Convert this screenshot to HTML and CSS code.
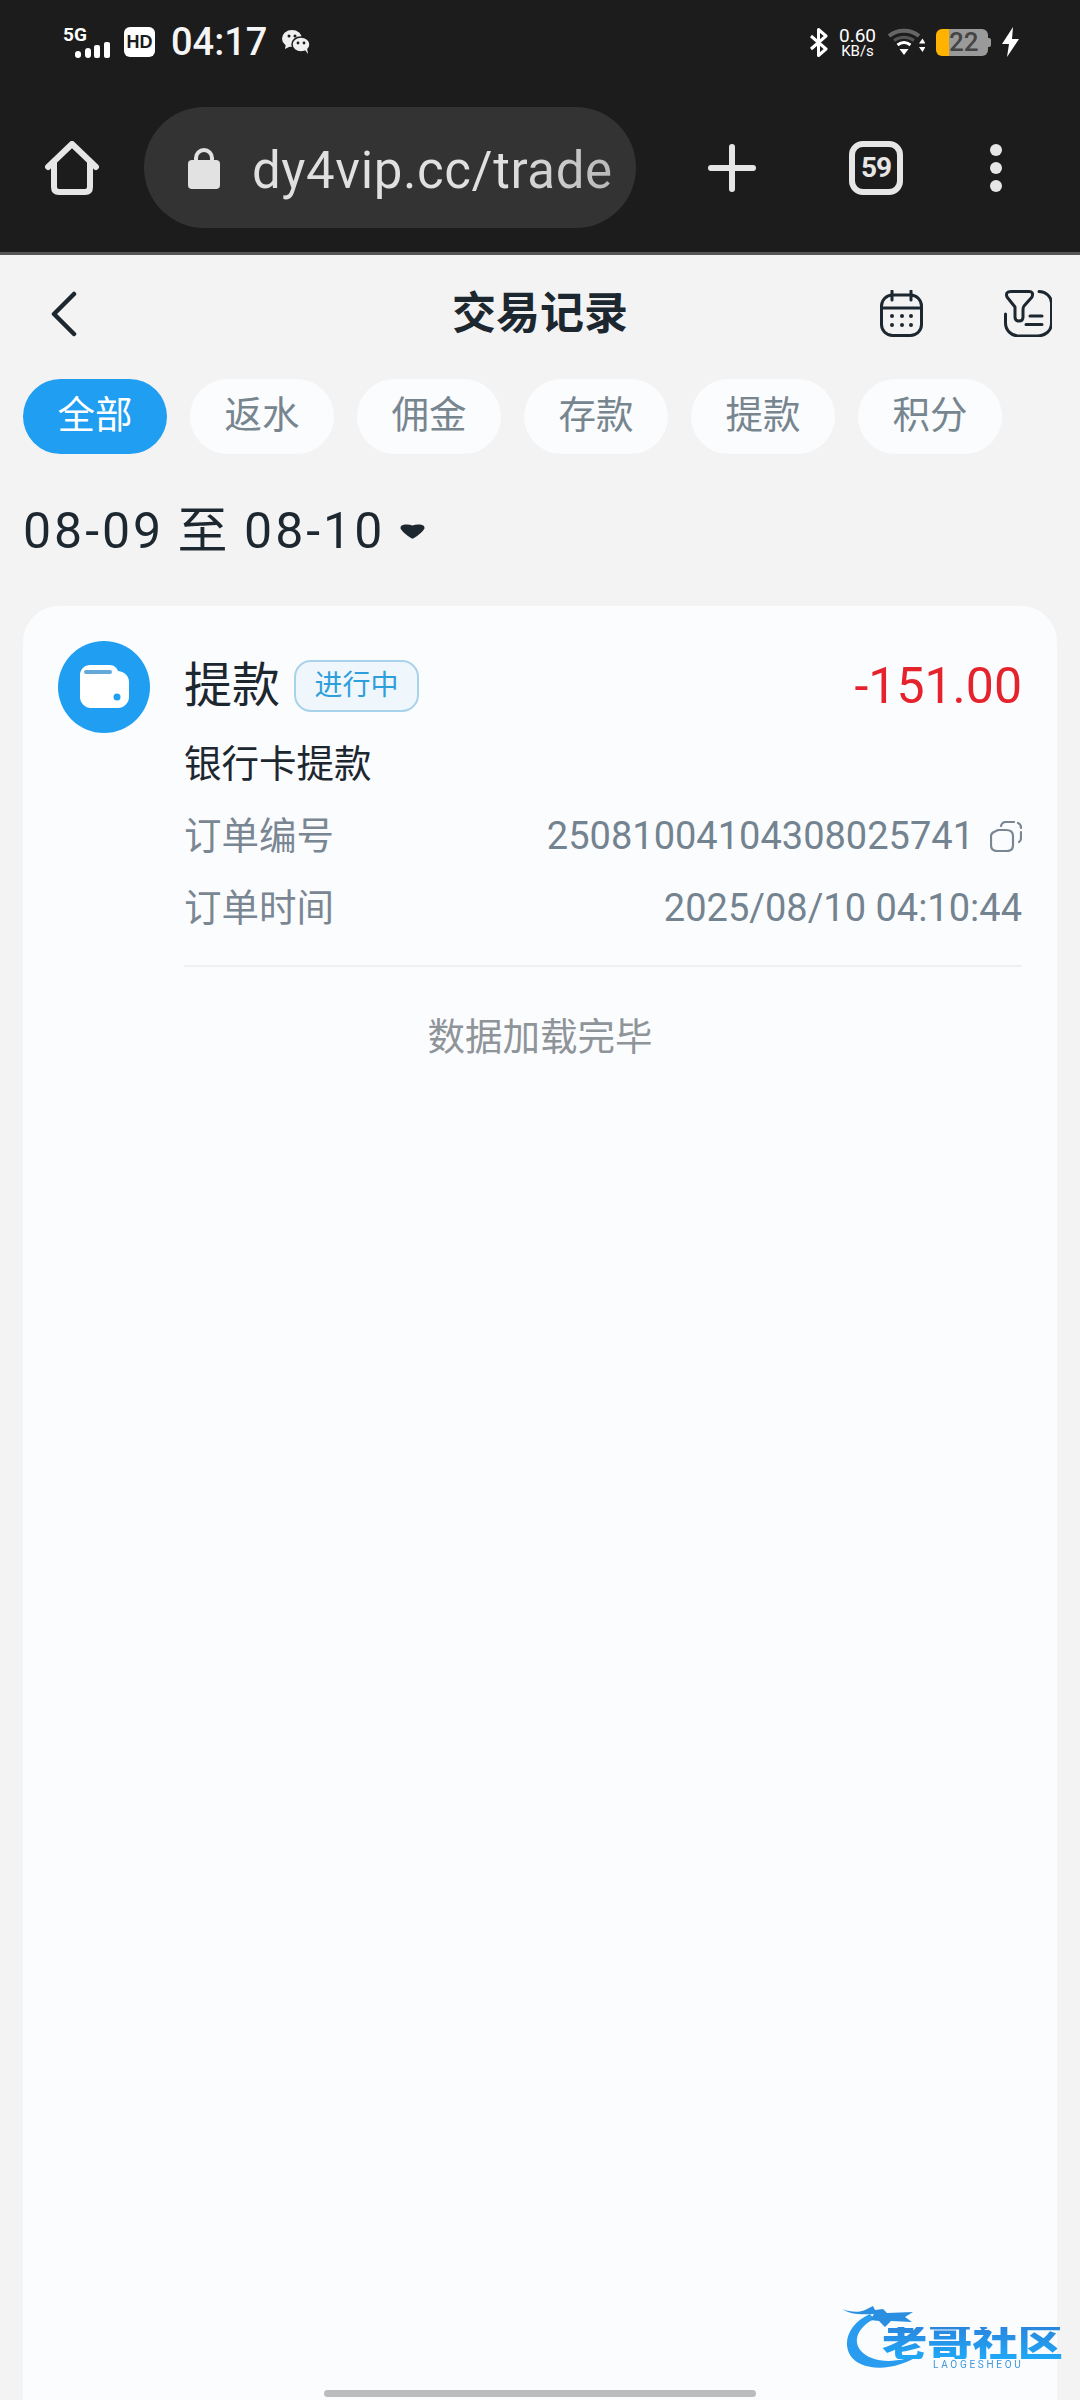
FILE: index.html
```html
<!DOCTYPE html>
<html lang="zh-CN">
<head>
<meta charset="utf-8">
<title>交易记录</title>
<link rel="stylesheet" href="styles.css">
</head>
<body>
<header class="browser">
  <div class="statusbar">
    <div class="status-left">
      <div class="network">
        <span class="network-label">5G</span>
        <svg class="signal" width="35" height="16" viewBox="0 0 35 16"><rect x="0" y="9" width="6" height="7" rx="3"/><rect x="10" y="6" width="6" height="10" rx="3"/><rect x="19" y="3" width="6" height="13" rx="2"/><rect x="29" y="0" width="6" height="16" rx="2"/></svg>
      </div>
      <span class="hd">HD</span>
      <span class="clock">04:17</span>
      <svg class="wechat" width="28" height="24" viewBox="0 0 28 24"><ellipse cx="10" cy="8.5" rx="10" ry="8.5" fill="#efefef"/><path d="M4 13l-1 6 6-3z" fill="#efefef"/><ellipse cx="19" cy="14.5" rx="9" ry="7.5" fill="#efefef" stroke="#1c1c1c" stroke-width="1.5"/><path d="M23 20l3 4-1-6z" fill="#efefef"/><circle cx="7" cy="6" r="1.5" fill="#1c1c1c"/><circle cx="13" cy="6" r="1.5" fill="#1c1c1c"/><circle cx="16" cy="13" r="1.4" fill="#1c1c1c"/><circle cx="22" cy="13" r="1.4" fill="#1c1c1c"/></svg>
    </div>
    <div class="status-right">
      <svg width="19" height="29" viewBox="0 0 19 29" fill="none" stroke="#fff" stroke-width="3" stroke-linejoin="round"><path d="M2 8l15 13-7.500 6.500V1.500L17 8 2 21"/></svg>
      <div class="speed"><span class="speed-value">0.60</span><span class="speed-unit">KB/s</span></div>
      <svg width="38" height="28" viewBox="0 0 38 28" fill="none"><path d="M2 8C10 1 24 1 32 8" stroke="#666" stroke-width="4"/><path d="M7 12.500c6-4.500 14-4.500 20 0" stroke="#555" stroke-width="3"/><path d="M10.500 17c4-3 9-3 13 0" stroke="#fff" stroke-width="3"/><path d="M12.500 21h9L17 27z" fill="#fff"/><path d="M32 15.500l3.500-5 3 5zM32 19h6.500l-3 5z" fill="#fff"/></svg>
      <div class="battery">22</div>
      <svg width="19" height="30" viewBox="0 0 19 30"><path d="M12 0L1 17h7L6 30l12-18h-7z" fill="#fff"/></svg>
    </div>
  </div>
  <div class="toolbar">
    <svg class="home" width="54" height="54" viewBox="0 0 54 54" fill="none" stroke="#e6e6e6" stroke-width="6" stroke-linecap="round" stroke-linejoin="round"><path d="M3 26L27 3l24 23"/><path d="M9 22v24q0 5 5 5h26q5 0 5-5V22"/></svg>
    <div class="urlbar">
      <svg width="32" height="42" viewBox="0 0 32 42"><path d="M8 16v-5a8 8 0 0 1 16 0v5" fill="none" stroke="#e2e2e2" stroke-width="4"/><rect y="13" width="32" height="29" rx="4" fill="#e2e2e2"/></svg>
      <span class="url">dy4vip.cc/trade</span>
    </div>
    <svg class="plus" width="48" height="48" viewBox="0 0 48 48" stroke="#e6e6e6" stroke-width="6" stroke-linecap="round"><path d="M3 24h42M24 3v42"/></svg>
    <div class="tabcount">59</div>
    <div class="menu"><i></i><i></i><i></i></div>
  </div>
</header>

<main class="page">
  <div class="titlebar">
    <svg class="back" width="26" height="46" viewBox="0 0 26 46" fill="none" stroke="#1d2730" stroke-width="4.500" stroke-linecap="round" stroke-linejoin="round"><path d="M23 3L3 23l20 20"/></svg>
    <h1 class="title">交易记录</h1>
    <div class="title-actions">
      <svg width="43" height="47" viewBox="0 0 43 47" fill="none" stroke="#1d2730" stroke-width="3" stroke-linecap="round"><rect x="1.500" y="5" width="40" height="40.500" rx="11"/><path d="M1.500 18h40M12 1v9M31 1v9"/><g fill="#1d2730" stroke="none"><circle cx="12" cy="26" r="2"/><circle cx="22" cy="26" r="2"/><circle cx="31" cy="26" r="2"/><circle cx="12" cy="35" r="2"/><circle cx="22" cy="35" r="2"/><circle cx="31" cy="35" r="2"/></g></svg>
      <svg width="48" height="47" viewBox="0 0 48 47" fill="none" stroke="#1d2730" stroke-width="3" stroke-linecap="round" stroke-linejoin="round"><path d="M3 7Q1 1.500 7 1.500h18Q30 1.500 28 7l-8 9q-1 1-1 4v7q0 4-4 4t-4-4V17z"/><path d="M35 1.500c7 0 12.500 5.500 12.500 11.500v20c0 8-6.500 13-14.500 13H15C7 46 1.500 40 1.500 33v-9"/><path d="M26 26h12M22 34.500h16"/></svg>
    </div>
  </div>

  <nav class="tabs">
    <span class="tab tab-active">全部</span>
    <span class="tab">返水</span>
    <span class="tab">佣金</span>
    <span class="tab">存款</span>
    <span class="tab">提款</span>
    <span class="tab">积分</span>
  </nav>

  <div class="daterange">
    <span>08-09 至 08-10</span>
    <svg width="25" height="16" viewBox="0 0 25 16"><path d="M5 1.500q4-.5 7.500 1 3.500-1.500 7.500-1 5 .5 4.500 4Q22 10 14 15q-1.500 1-3 0Q3 10 .5 5.500 0 2 5 1.500z" fill="#1d2730"/></svg>
  </div>

  <section class="card">
    <article class="record">
      <svg class="record-icon" width="92" height="92" viewBox="0 0 92 92"><circle cx="46" cy="46" r="46" fill="#209ef1"/><path d="M32 24h20c4 0 7 3 8 6 7 1 11 5 11 11v15c0 6-5 11-11 11H33c-6 0-11-5-11-11V34c0-6 5-10 10-10z" fill="#fff"/><rect x="26" y="29" width="28" height="4" rx="2" fill="#65a9d9"/><circle cx="59" cy="56" r="3.500" fill="#209ef1"/></svg>
      <div class="record-body">
        <div class="record-head">
          <span class="record-type">提款</span>
          <span class="status-badge">进行中</span>
          <span class="amount">-151.00</span>
        </div>
        <div class="record-method">银行卡提款</div>
        <div class="record-row">
          <span>订单编号</span>
          <span class="record-value">25081004104308025741<svg class="copy" width="32" height="31" viewBox="0 0 32 31" fill="none" stroke="#7a8793" stroke-width="2.200" stroke-linecap="round"><path d="M8 9h8q7 0 7 6v9q0 6-6 6H7q-6 0-6-6v-9q0-2 2-3.500z"/><path d="M11 5q1-4 5-4h8M28 2q3 1 3 5M31 11v6q0 3-2 4"/></svg></span>
        </div>
        <div class="record-row">
          <span>订单时间</span>
          <span class="record-value">2025/08/10 04:10:44</span>
        </div>
      </div>
    </article>
    <p class="list-end">数据加载完毕</p>
  </section>
</main>

<!-- community logo and gesture bar sit over the card -->
<div class="logo">
  <svg class="logo-mark" width="90" height="68" viewBox="0 0 90 68"><path d="M28 9C8 18 0 36 8 50c9 15 42 20 74-3-27 13-52 11-63-1C10 36 16 22 32 14z" fill="#2a9cf0"/><path d="M0 4c8 3 17 4 23 1l8-4 2 4 8-1 4 4 26-1-8 5 7 5-21-1-6 6-6-6-9-1 4-6C18 10 8 9 0 4z" fill="#2a8fe0"/></svg>
  <span class="logo-name">老哥社区</span>
  <span class="logo-sub">LAOGESHEOU</span>
</div>
<div class="gesture-bar"></div>
</body>
</html>
```
FILE: styles.css
```css
* { box-sizing: border-box; }

html, body {
  margin: 0;
  padding: 0;
  height: 2400px;
  overflow: hidden;
}

body {
  position: relative;
  background: #f3f3f3;
  font-family: Roboto, "Noto Sans CJK SC", sans-serif;
  color: #1d2730;
}

/* Browser chrome */
.browser {
  height: 255px;
  background: #1c1c1c;
  border-bottom: 3px solid #555;
}

.statusbar {
  height: 84px;
  display: flex;
  justify-content: space-between;
  align-items: center;
  padding: 0 60px 0 63px;
}

.status-left,
.status-right {
  display: flex;
  align-items: center;
}

.network {
  width: 47px;
  display: flex;
  flex-direction: column;
}

.network-label {
  font-size: 19px;
  line-height: 15px;
  font-weight: 700;
  color: #fff;
}

.signal {
  fill: #fff;
  margin: 0 0 0 12px;
}

.hd {
  width: 31px;
  height: 30px;
  margin-left: 14px;
  border-radius: 6px;
  background: #fff;
  color: #1c1c1c;
  font: 700 18px/30px "Liberation Sans", sans-serif;
  text-align: center;
}

.clock {
  margin-left: 16px;
  font-size: 38px;
  line-height: 44px;
  font-weight: 500;
  color: #f5f5f5;
}

.wechat {
  margin-left: 15px;
}

.status-right {
  gap: 11px;
}

.speed {
  display: flex;
  flex-direction: column;
  align-items: center;
  color: #fff;
}

.speed-value {
  font-size: 19px;
  line-height: 17px;
}

.speed-unit {
  font-size: 15px;
  line-height: 14px;
}

.battery {
  position: relative;
  width: 52px;
  height: 27px;
  margin-right: 2px;
  padding-left: 13px;
  border-radius: 6px;
  background: linear-gradient(90deg, #ffb300 13px, #9a9a9a 13px);
  color: #444;
  font-size: 26px;
  line-height: 27px;
  font-weight: 500;
}

.battery::after {
  content: "";
  position: absolute;
  top: 9px;
  right: -3px;
  width: 3px;
  height: 9px;
  border-radius: 0 2px 2px 0;
  background: #9a9a9a;
}

.toolbar {
  height: 121px;
  margin-top: 23px;
  padding-left: 45px;
  display: flex;
  align-items: center;
}

.urlbar {
  width: 492px;
  height: 121px;
  margin-left: 45px;
  padding-left: 44px;
  border-radius: 61px;
  background: #333;
  display: flex;
  align-items: center;
}

.url {
  margin-left: 32px;
  padding-top: 5px;
  font-size: 51px;
  letter-spacing: 0.600px;
  background: linear-gradient(90deg, #e0e0e0 70%, #b8b8b8 100%);
  -webkit-background-clip: text;
  background-clip: text;
  color: transparent;
}

.plus {
  margin-left: 72px;
}

.tabcount {
  width: 54px;
  height: 54px;
  margin-left: 93px;
  border: 6px solid #e6e6e6;
  border-radius: 14px;
  color: #e6e6e6;
  font-size: 28px;
  font-weight: 700;
  line-height: 42px;
  letter-spacing: -1px;
  text-align: center;
}

.menu {
  margin-left: 87px;
  display: flex;
  flex-direction: column;
  gap: 6px;
}

.menu i {
  display: block;
  width: 12px;
  height: 12px;
  border-radius: 50%;
  background: #e6e6e6;
}

/* Page */
.titlebar {
  height: 115px;
  padding: 2px 28px 0;
  display: grid;
  grid-template-columns: 1fr auto 1fr;
  align-items: center;
}

.back {
  margin-left: 23px;
}

.title {
  margin: 0;
  font-size: 44px;
  font-weight: 700;
  line-height: 60px;
  color: #1d2730;
}

.title-actions {
  justify-self: end;
  display: flex;
  gap: 81px;
}

.tabs {
  margin-top: 9px;
  padding-left: 23px;
  display: flex;
  gap: 23px;
}

.tab {
  width: 144px;
  height: 75px;
  border-radius: 38px;
  background: #fbfcfe;
  color: #77858f;
  font-size: 37.500px;
  line-height: 73px;
  text-align: center;
}

.tab-active {
  background: #209ef1;
  color: #fff;
}

.daterange {
  height: 54px;
  margin-top: 50px;
  padding-left: 23px;
  display: flex;
  align-items: center;
  gap: 15px;
  font-size: 50px;
  line-height: 54px;
  letter-spacing: 3px;
  word-spacing: -2px;
}

.card {
  height: 1794px;
  margin: 48px 23px 0;
  padding: 35px 35px 0;
  border-radius: 36px 36px 0 0;
  background: #fbfcfe;
}

.record {
  display: flex;
  gap: 34px;
}

.record-icon {
  flex: none;
}

.record-body {
  flex: 1;
  padding-top: 19px;
  border-bottom: 2px solid #eef0f2;
  padding-bottom: 32px;
}

.record-head {
  height: 52px;
  display: flex;
  align-items: center;
}

.record-type {
  font-size: 48px;
  line-height: 52px;
}

.status-badge {
  width: 125px;
  height: 52px;
  margin-left: 14px;
  border: 2px solid #a9d3ea;
  border-radius: 17px;
  background: #f0f7fc;
  color: #2f9fdc;
  font-size: 28px;
  line-height: 48px;
  text-align: center;
}

.amount {
  margin-left: auto;
  font-size: 50px;
  line-height: 52px;
  color: #e5232c;
}

.record-method {
  height: 50px;
  margin-top: 27px;
  font-size: 37.500px;
  line-height: 50px;
}

.record-row {
  height: 50px;
  margin-top: 22px;
  display: flex;
  justify-content: space-between;
  align-items: center;
  font-size: 37.500px;
  line-height: 50px;
  color: #7a8793;
}

.record-value {
  display: flex;
  align-items: center;
  font-size: 38px;
  color: #738390;
}

.copy {
  margin-left: 16px;
}

.list-end {
  margin: 45px 0 0;
  font-size: 37.500px;
  line-height: 50px;
  color: #8f9499;
  text-align: center;
}

/* Overlays */
.logo {
  position: absolute;
  left: 842px;
  top: 2305px;
  width: 222px;
  height: 66px;
  filter: blur(0.6px);
}

.logo-mark {
  position: absolute;
  left: 0;
  top: 0;
}

.logo-name {
  position: absolute;
  left: 40px;
  top: 22px;
  width: 151px;
  font-size: 38px;
  font-weight: 900;
  line-height: 32px;
  white-space: nowrap;
  transform: scaleX(1.19);
  transform-origin: left center;
  background: linear-gradient(180deg, #2a86de, #1fa8f6);
  -webkit-background-clip: text;
  background-clip: text;
  color: transparent;
}

.logo-sub {
  position: absolute;
  left: 91px;
  top: 54px;
  font-size: 10px;
  line-height: 12px;
  letter-spacing: 2.700px;
  color: #3f97dc;
}

.gesture-bar {
  position: absolute;
  left: 324px;
  top: 2390px;
  width: 432px;
  height: 7px;
  border-radius: 4px;
  background: #bbbcbe;
}
```
